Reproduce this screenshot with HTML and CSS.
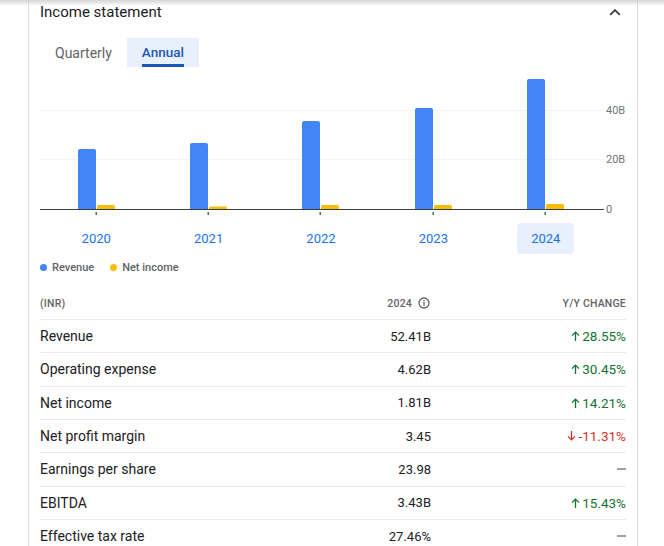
FILE: index.html
```html
<!DOCTYPE html>
<html>
<head>
<meta charset="utf-8">
<link rel="stylesheet" href="styles.css">
</head>
<body>
<div class="topshade"></div>
<div class="card">
  <div class="header">
    <div class="title">Income statement</div>
    <svg class="chev" width="12" height="8" viewBox="0 0 12 8"><path d="M1.2 6.8 6 2l4.8 4.8" fill="none" stroke="#3c4043" stroke-width="1.8"/></svg>
  </div>
  <div class="tabs">
    <div class="tab">Quarterly</div>
    <div class="tab active"><span>Annual</span></div>
  </div>
  <svg class="chart" width="586" height="147" viewBox="0 0 586 147">
    <line x1="0" y1="40.5" x2="564" y2="40.5" stroke="#f1f3f4" stroke-width="1"/>
    <line x1="0" y1="89.5" x2="564" y2="89.5" stroke="#f1f3f4" stroke-width="1"/>
    <text x="566" y="44" class="axis">40B</text>
    <text x="566" y="93" class="axis">20B</text>
    <text x="566" y="143" class="axis">0</text>
    <g fill="#4285f4">
      <rect x="38" y="79" width="18" height="64" rx="2"/>
      <rect x="150" y="73" width="18" height="70" rx="2"/>
      <rect x="262" y="51" width="18" height="92" rx="2"/>
      <rect x="375" y="38" width="18" height="105" rx="2"/>
      <rect x="487" y="9" width="18" height="134" rx="2"/>
    </g>
    <g fill="#fbbc04">
      <rect x="57" y="135" width="18" height="8" rx="1.5"/>
      <rect x="169" y="136.5" width="18" height="7" rx="1.5"/>
      <rect x="281" y="135" width="18" height="8" rx="1.5"/>
      <rect x="394" y="135" width="18" height="8" rx="1.5"/>
      <rect x="506" y="134" width="18" height="9" rx="1.5"/>
    </g>
    <rect x="0" y="139.5" width="564" height="6" fill="#fff"/>
    <line x1="0" y1="139.5" x2="564" y2="139.5" stroke="#3c4043" stroke-width="1.2"/>
    <g fill="#5f6368">
      <rect x="55.5" y="142" width="1.5" height="3"/>
      <rect x="167.5" y="142" width="1.5" height="3"/>
      <rect x="279.5" y="142" width="1.5" height="3"/>
      <rect x="392.5" y="142" width="1.5" height="3"/>
      <rect x="504.5" y="142" width="1.5" height="3"/>
    </g>
  </svg>
  <div class="years">
    <div class="ycol"><span class="year">2020</span></div>
    <div class="ycol"><span class="year">2021</span></div>
    <div class="ycol"><span class="year">2022</span></div>
    <div class="ycol"><span class="year">2023</span></div>
    <div class="ycol"><span class="year sel">2024</span></div>
  </div>
  <div class="legend">
    <span class="dot blue"></span><span class="lg">Revenue</span>
    <span class="dot yellow"></span><span class="lg">Net income</span>
  </div>
  <div class="table">
    <div class="row head">
      <div>(INR)</div>
      <div class="val hv">2024<svg class="info" width="12" height="12" viewBox="0 0 12 12"><circle cx="6" cy="6" r="5" fill="none" stroke="#5f6368" stroke-width="1.3"/><rect x="5.35" y="5" width="1.3" height="3.8" fill="#5f6368"/><rect x="5.35" y="2.9" width="1.3" height="1.3" fill="#5f6368"/></svg></div>
      <div class="chg">Y/Y CHANGE</div>
    </div>
    <div class="row">
      <div class="lbl">Revenue</div><div class="val">52.41B</div>
      <div class="chg up"><svg class="arr" width="9" height="10" viewBox="0 0 9 10"><path d="M4.5 10V1.2M1 4.6l3.5-3.5L8 4.6" fill="none" stroke="currentColor" stroke-width="1.3"/></svg>28.55%</div>
    </div>
    <div class="row">
      <div class="lbl">Operating expense</div><div class="val">4.62B</div>
      <div class="chg up"><svg class="arr" width="9" height="10" viewBox="0 0 9 10"><path d="M4.5 10V1.2M1 4.6l3.5-3.5L8 4.6" fill="none" stroke="currentColor" stroke-width="1.3"/></svg>30.45%</div>
    </div>
    <div class="row">
      <div class="lbl">Net income</div><div class="val">1.81B</div>
      <div class="chg up"><svg class="arr" width="9" height="10" viewBox="0 0 9 10"><path d="M4.5 10V1.2M1 4.6l3.5-3.5L8 4.6" fill="none" stroke="currentColor" stroke-width="1.3"/></svg>14.21%</div>
    </div>
    <div class="row">
      <div class="lbl">Net profit margin</div><div class="val">3.45</div>
      <div class="chg down"><svg class="arr" width="9" height="10" viewBox="0 0 9 10"><path d="M4.5 0V8.8M1 5.4l3.5 3.5L8 5.4" fill="none" stroke="currentColor" stroke-width="1.3"/></svg>-11.31%</div>
    </div>
    <div class="row">
      <div class="lbl">Earnings per share</div><div class="val">23.98</div>
      <div class="chg"><span class="dash"></span></div>
    </div>
    <div class="row">
      <div class="lbl">EBITDA</div><div class="val">3.43B</div>
      <div class="chg up"><svg class="arr" width="9" height="10" viewBox="0 0 9 10"><path d="M4.5 10V1.2M1 4.6l3.5-3.5L8 4.6" fill="none" stroke="currentColor" stroke-width="1.3"/></svg>15.43%</div>
    </div>
    <div class="row">
      <div class="lbl">Effective tax rate</div><div class="val">27.46%</div>
      <div class="chg"><span class="dash"></span></div>
    </div>
  </div>
</div>
</body>
</html>
```

FILE: styles.css
```css
html, body {
  margin: 0;
  padding: 0;
  background: #fff;
  height: 546px;
  overflow: hidden;
}
body {
  font-family: Roboto, "Liberation Sans", sans-serif;
  color: #202124;
}
.topshade {
  position: absolute;
  top: 0;
  left: 0;
  right: 0;
  height: 6px;
  background: linear-gradient(#d4d4d4, rgba(255,255,255,0));
  z-index: 2;
}
.card {
  margin-left: 28px;
  width: 610px;
  box-sizing: border-box;
  border-left: 1px solid #dadce0;
  border-right: 1px solid #dadce0;
  padding: 0 11px;
  min-height: 546px;
}
.header {
  height: 24px;
  display: flex;
  align-items: center;
  justify-content: space-between;
}
.title {
  font-size: 15px;
  line-height: 24px;
  color: #202124;
}
.chev {
  margin-right: 5px;
  margin-top: -1px;
}
.tabs {
  margin-top: 14px;
  height: 29px;
  display: flex;
}
.tab {
  padding: 0 15px;
  display: flex;
  align-items: center;
  font-size: 14px;
  color: #5f6368;
}
.tab.active {
  background: #e8f0fe;
  color: #1a56b5;
  align-items: stretch;
  font-size: 13.5px;
  font-weight: 500;
}
.tab.active span {
  display: flex;
  align-items: center;
  padding-top: 2px;
  border-bottom: 3px solid #1a56b5;
  box-sizing: border-box;
}
.chart {
  display: block;
  margin-top: 3px;
}
.axis {
  font-family: Roboto, "Liberation Sans", sans-serif;
  font-size: 11px;
  fill: #70757a;
}
.years {
  margin-top: 6px;
  display: flex;
  height: 31px;
}
.ycol {
  width: 112.4px;
  display: flex;
  justify-content: center;
}
.year {
  display: block;
  font-size: 13px;
  line-height: 15px;
  padding: 8px 14px;
  color: #1a73e8;
  border-radius: 4px;
}
.year.sel {
  background: #e8f0fe;
}
.legend {
  margin-top: 6px;
  height: 14px;
  display: flex;
  align-items: center;
  font-size: 11px;
  font-weight: 500;
  color: #5f6368;
}
.dot {
  width: 7px;
  height: 7px;
  border-radius: 50%;
  margin-right: 5px;
}
.dot.blue { background: #4285f4; }
.dot.yellow { background: #fbbc04; margin-left: 16px; }
.table {
  margin-top: 13px;
}
.row {
  display: grid;
  grid-template-columns: 1fr 150px 195px;
  align-items: center;
  height: 33.33px;
  box-sizing: border-box;
  border-top: 1px solid #e8eaed;
  font-size: 13px;
}
.lbl {
  font-size: 14px;
}
.row.head {
  border-top: none;
  height: 32px;
  font-size: 10.5px;
  font-weight: 500;
  letter-spacing: 0.2px;
  color: #5f6368;
}
.val {
  text-align: right;
}
.hv {
  display: flex;
  align-items: center;
  justify-content: flex-end;
}
.info {
  margin-left: 6px;
  margin-right: 1px;
}
.chg {
  display: flex;
  align-items: center;
  justify-content: flex-end;
  font-size: 13.5px;
}
.row.head .chg {
  font-size: 10.5px;
}
.up { color: #137333; }
.down { color: #d93025; }
.arr {
  margin-right: 2px;
}
.dash {
  display: block;
  width: 9px;
  height: 2px;
  background: #9aa0a6;
}
```
